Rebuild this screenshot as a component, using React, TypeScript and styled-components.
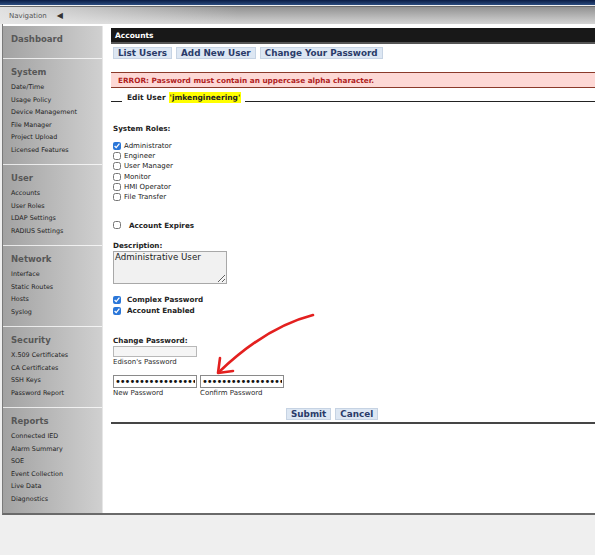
import styled, { createGlobalStyle } from "styled-components";

const GlobalStyle = createGlobalStyle`
  html, body { margin: 0; padding: 0; background: #efefef; }
  body {
    width: 595px;
    overflow: hidden;
    font-family: "DejaVu Sans", Verdana, sans-serif;
    color: #222;
  }
`;

const TopStripe = styled.div`
  height: 5px;
  background: linear-gradient(to bottom, #0a1c44, #2c4d80);
  border-bottom: 1px solid #f2f2f2;
`;

const NavBar = styled.div`
  display: flex;
  align-items: center;
  gap: 10px;
  height: 17px;
  padding-left: 9px;
  border-top: 1px solid #6b6b6b;
  font-size: 7px;
  color: #555;
  background: linear-gradient(to right, rgba(232, 232, 232, 0.9), rgba(232, 232, 232, 0) 40%),
    linear-gradient(to bottom, #929292, #d4d4d4);
`;

const NavArrow = styled.span`
  font-size: 8px;
  color: #333;
`;

const Frame = styled.div`
  display: flex;
  align-items: flex-start;
  margin-left: 2px;
  padding-top: 2px;
  background: #fff;
  border-left: 1px solid #7a7a7a;
  border-bottom: 2px solid #6a6a6a;
`;

const Sidebar = styled.nav`
  width: 100px;
  flex-shrink: 0;
  background: linear-gradient(to right, #a2a2a2, #d0d0d0);
  border-right: 1px solid #e6e6e6;
  box-sizing: border-box;
`;

const Section = styled.div<{ $last?: boolean; $bottom?: number }>`
  padding: 6px 0 ${(p) => p.$bottom ?? 8}px 8px;
  border-bottom: ${(p) => (p.$last ? "none" : "1px solid rgba(255,255,255,0.75)")};
`;

const SectionTitle = styled.div`
  font-size: 8.5px;
  font-weight: bold;
  line-height: 14px;
  color: #575757;
  margin-bottom: 2px;
`;

const NavLink = styled.div`
  font-size: 6.4px;
  line-height: 12.5px;
  color: #1e1e1e;
`;

const Main = styled.main`
  position: relative;
  flex: 1;
  margin-left: 8px;
  padding-top: 2px;
`;

const TitleBar = styled.div`
  height: 14px;
  display: flex;
  align-items: center;
  padding-left: 4px;
  background: #181818;
  border-bottom: 2px solid #555;
  color: #fff;
  font-size: 7.5px;
  font-weight: bold;
`;

const ButtonRow = styled.div<{ $left?: number; $top?: number }>`
  display: flex;
  gap: 4px;
  margin-left: ${(p) => p.$left ?? 2}px;
  margin-top: ${(p) => p.$top ?? 0}px;
`;

const Button = styled.button`
  height: 12px;
  padding: 0 4px;
  margin: 0;
  background: #dde7f3;
  border: 1px solid #c6d3e3;
  color: #2a3b69;
  font-family: "DejaVu Sans", Verdana, sans-serif;
  font-size: 8.8px;
  font-weight: bold;
  line-height: 10px;
  cursor: pointer;
`;

const ErrorBox = styled.div`
  margin-top: 13px;
  height: 14px;
  display: flex;
  align-items: center;
  padding-left: 7px;
  background: #fdd8d5;
  border-top: 1px solid #8a3a2a;
  border-bottom: 1px solid #8a3a2a;
  color: #b01e1e;
  font-size: 7.3px;
  font-weight: bold;
`;

const Legend = styled.div`
  display: flex;
  align-items: flex-end;
  margin-top: 4px;
  font-size: 7.5px;
  font-weight: bold;
  line-height: 10px;
  &::before,
  &::after {
    content: "";
    border-bottom: 1.5px solid #222;
    margin-bottom: 1px;
  }
  &::before {
    width: 11px;
    margin-right: 5px;
  }
  &::after {
    flex: 1;
    margin-left: 4px;
  }
`;

const Highlight = styled.span`
  background: #ffff00;
  margin-left: 3px;
  padding: 1px 1px 0;
`;

const Form = styled.div`
  padding-left: 2px;
`;

const Label = styled.div<{ $top?: number }>`
  margin-top: ${(p) => p.$top ?? 0}px;
  font-size: 7.2px;
  font-weight: bold;
  line-height: 10px;
`;

const CheckList = styled.div<{ $top?: number }>`
  display: flex;
  flex-direction: column;
  margin-top: ${(p) => p.$top ?? 0}px;
`;

const CheckRow = styled.label<{ $bold?: boolean; $gap?: number; $height?: number }>`
  display: flex;
  align-items: center;
  gap: ${(p) => p.$gap ?? 3}px;
  height: ${(p) => p.$height ?? 10.2}px;
  font-size: ${(p) => (p.$bold ? 7.2 : 7)}px;
  font-weight: ${(p) => (p.$bold ? "bold" : "normal")};
  color: #222;
`;

const Check = styled.input.attrs({ type: "checkbox" })`
  width: 8px;
  height: 8px;
  margin: 0;
  accent-color: #2a76d8;
`;

const Description = styled.textarea`
  display: block;
  width: 114px;
  height: 33px;
  margin: 0;
  padding: 0 1px;
  box-sizing: border-box;
  background: #f1f1f1;
  border: 1px solid #a8a8a8;
  font-family: "DejaVu Sans", Verdana, sans-serif;
  font-size: 8.7px;
  line-height: 11px;
  color: #222;
`;

const FieldRow = styled.div<{ $top?: number }>`
  display: flex;
  gap: 3px;
  margin-top: ${(p) => p.$top ?? 0}px;
`;

const Field = styled.div`
  display: flex;
  flex-direction: column;
`;

const PassInput = styled.input<{ $empty?: boolean }>`
  width: 84px;
  height: ${(p) => (p.$empty ? 11 : 13)}px;
  margin: 0;
  padding: 0 1px;
  box-sizing: border-box;
  background: ${(p) => (p.$empty ? "#f5f5f5" : "#fff")};
  border: 1px solid ${(p) => (p.$empty ? "#b8b8b8" : "#8a8a8a")};
  font-family: "DejaVu Sans", Verdana, sans-serif;
  font-size: 10px;
  letter-spacing: -1.1px;
  color: #111;
`;

const Hint = styled.div`
  font-size: 7px;
  line-height: 10px;
  color: #2a2a2a;
`;

const Rule = styled.div`
  margin-top: 2px;
  height: 2px;
  background: #454545;
`;

const Annotation = styled.svg`
  position: absolute;
  left: 100px;
  top: 282px;
  pointer-events: none;
`;

const NAV = [
  { title: "System", links: ["Date/Time", "Usage Policy", "Device Management", "File Manager", "Project Upload", "Licensed Features"] },
  { title: "User", links: ["Accounts", "User Roles", "LDAP Settings", "RADIUS Settings"] },
  { title: "Network", links: ["Interface", "Static Routes", "Hosts", "Syslog"] },
  { title: "Security", links: ["X.509 Certificates", "CA Certificates", "SSH Keys", "Password Report"] },
  { title: "Reports", links: ["Connected IED", "Alarm Summary", "SOE", "Event Collection", "Live Data", "Diagnostics"] },
];

const ROLES = [
  { name: "Administrator", on: true },
  { name: "Engineer", on: false },
  { name: "User Manager", on: false },
  { name: "Monitor", on: false },
  { name: "HMI Operator", on: false },
  { name: "File Transfer", on: false },
];

export default function App() {
  return (
    <>
      <GlobalStyle />
      <TopStripe />
      <NavBar>
        <span>Navigation</span>
        <NavArrow>◀</NavArrow>
      </NavBar>
      <Frame>
        <Sidebar>
          <Section $bottom={10}>
            <SectionTitle>Dashboard</SectionTitle>
          </Section>
          {NAV.map((s, i) => (
            <Section key={s.title} $last={i === NAV.length - 1}>
              <SectionTitle>{s.title}</SectionTitle>
              {s.links.map((l) => (
                <NavLink key={l}>{l}</NavLink>
              ))}
            </Section>
          ))}
        </Sidebar>

        <Main>
          <TitleBar>Accounts</TitleBar>
          <ButtonRow $top={3}>
            <Button>List Users</Button>
            <Button>Add New User</Button>
            <Button>Change Your Password</Button>
          </ButtonRow>
          <ErrorBox>ERROR: Password must contain an uppercase alpha character.</ErrorBox>
          <Legend>
            Edit User<Highlight>'jmkengineering'</Highlight>
          </Legend>

          <Form>
            <Label $top={21}>System Roles:</Label>
            <CheckList $top={7}>
              {ROLES.map((r) => (
                <CheckRow key={r.name}>
                  <Check defaultChecked={r.on} />
                  {r.name}
                </CheckRow>
              ))}
            </CheckList>

            <CheckList $top={17}>
              <CheckRow $bold $gap={8} $height={12}>
                <Check />
                Account Expires
              </CheckRow>
            </CheckList>

            <Label $top={10}>Description:</Label>
            <Description defaultValue="Administrative User" />

            <CheckList $top={10}>
              <CheckRow $bold $gap={6} $height={11}>
                <Check defaultChecked />
                Complex Password
              </CheckRow>
              <CheckRow $bold $gap={6} $height={11}>
                <Check defaultChecked />
                Account Enabled
              </CheckRow>
            </CheckList>

            <Label $top={20}>Change Password:</Label>
            <Field>
              <PassInput $empty readOnly />
              <Hint>Edison's Password</Hint>
            </Field>

            <FieldRow $top={8}>
              <Field>
                <PassInput type="password" readOnly value="aaaaaaaaaaaaaaaaa" />
                <Hint>New Password</Hint>
              </Field>
              <Field>
                <PassInput type="password" readOnly value="aaaaaaaaaaaaaaaaa" />
                <Hint>Confirm Password</Hint>
              </Field>
            </FieldRow>

            <ButtonRow $left={173} $top={10}>
              <Button>Submit</Button>
              <Button>Cancel</Button>
            </ButtonRow>
          </Form>
          <Rule />

          <Annotation width="110" height="70" viewBox="0 0 110 70">
            <path
              d="M102 7 Q55 19 8 64"
              fill="none"
              stroke="#e3201f"
              strokeWidth="2.6"
              strokeLinecap="round"
            />
            <path
              d="M9 50 L7 65 L22 63"
              fill="none"
              stroke="#e3201f"
              strokeWidth="2.6"
              strokeLinecap="round"
              strokeLinejoin="round"
            />
          </Annotation>
        </Main>
      </Frame>
    </>
  );
}
